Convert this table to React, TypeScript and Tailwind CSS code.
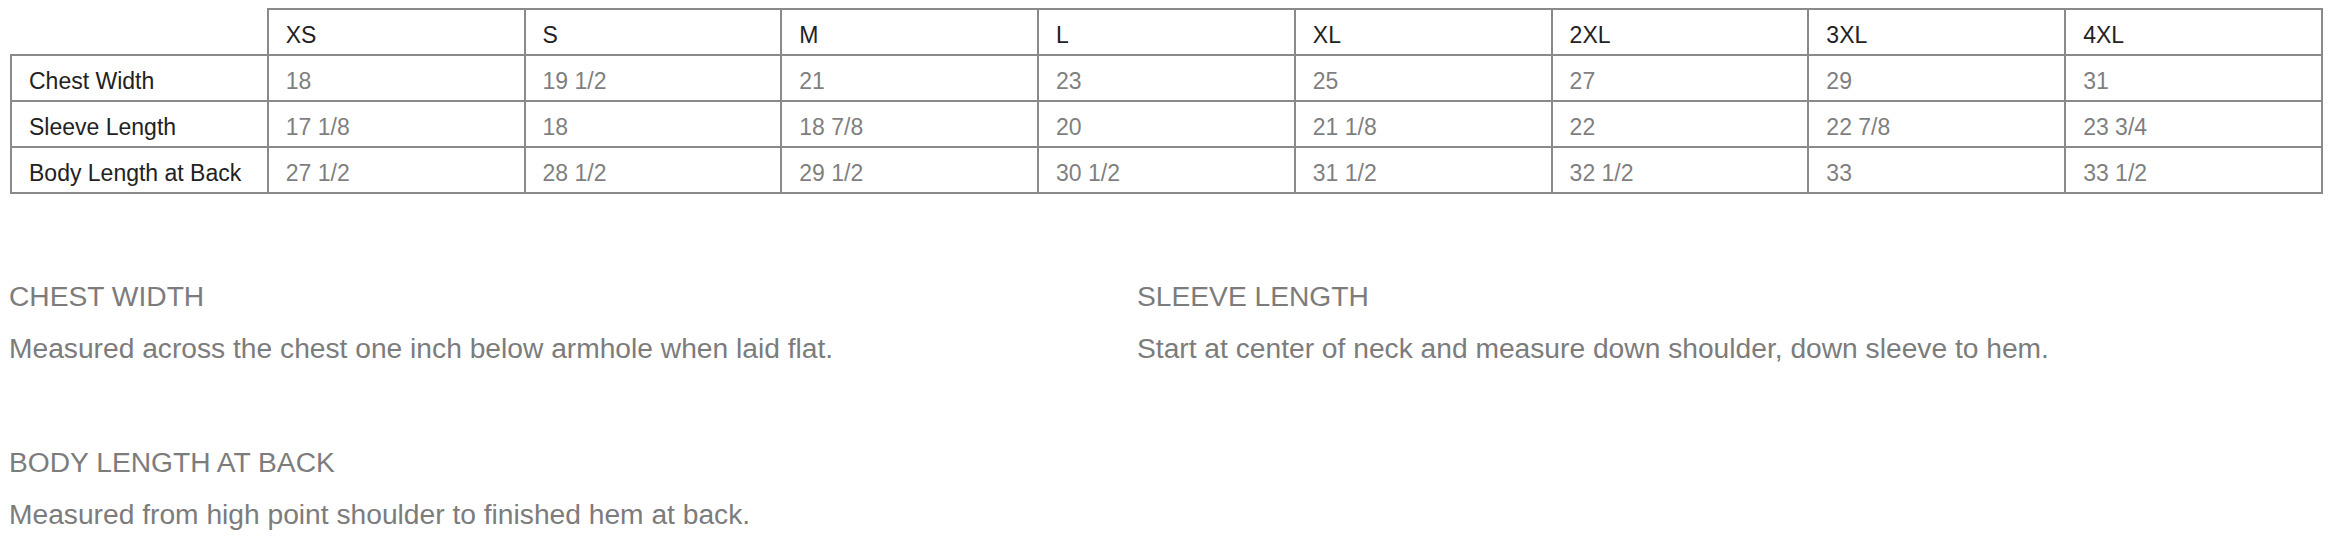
import React from "react";

const sizes = ["XS", "S", "M", "L", "XL", "2XL", "3XL", "4XL"];
const rows: { label: string; values: string[] }[] = [
  { label: "Chest Width", values: ["18", "19 1/2", "21", "23", "25", "27", "29", "31"] },
  { label: "Sleeve Length", values: ["17 1/8", "18", "18 7/8", "20", "21 1/8", "22", "22 7/8", "23 3/4"] },
  { label: "Body Length at Back", values: ["27 1/2", "28 1/2", "29 1/2", "30 1/2", "31 1/2", "32 1/2", "33", "33 1/2"] },
];

const notes = [
  { title: "CHEST WIDTH", text: "Measured across the chest one inch below armhole when laid flat." },
  { title: "SLEEVE LENGTH", text: "Start at center of neck and measure down shoulder, down sleeve to hem." },
  { title: "BODY LENGTH AT BACK", text: "Measured from high point shoulder to finished hem at back." },
];

export default function App() {
  return (
    <div className="min-h-[540px] w-[2330px] bg-white font-['Liberation_Sans',Arial,Helvetica,sans-serif]">
      <div className="pl-[10px] pr-[7px] pt-[8px]">
        <table className="w-full table-fixed border-collapse text-[23px] leading-none">
          <thead>
            <tr>
              <th className="h-[46px] border-b-2 border-r-2 border-[#8a8a8a]"></th>
              {sizes.map((s) => (
                <th
                  key={s}
                  className="h-[46px] border-2 border-[#8a8a8a] px-[17px] pt-[6px] pb-0 text-left font-normal text-[#222]"
                >
                  {s}
                </th>
              ))}
            </tr>
          </thead>
          <tbody>
            {rows.map((r) => (
              <tr key={r.label}>
                <td className="h-[46px] border-2 border-[#8a8a8a] px-[17px] pt-[6px] pb-0 text-[#222]">{r.label}</td>
                {r.values.map((v, i) => (
                  <td key={i} className="h-[46px] border-2 border-[#8a8a8a] px-[17px] pt-[6px] pb-0 text-[#7f7f7f]">
                    {v}
                  </td>
                ))}
              </tr>
            ))}
          </tbody>
        </table>
      </div>
      <div className="mt-[88px] grid grid-cols-[1128px_1fr] gap-y-[86px] pl-[9px] text-[28.2px] leading-[28px] text-[#7c7c7c]">
        {notes.map((n) => (
          <div key={n.title}>
            <div>{n.title}</div>
            <div className="mt-[24px]">{n.text}</div>
          </div>
        ))}
      </div>
    </div>
  );
}
